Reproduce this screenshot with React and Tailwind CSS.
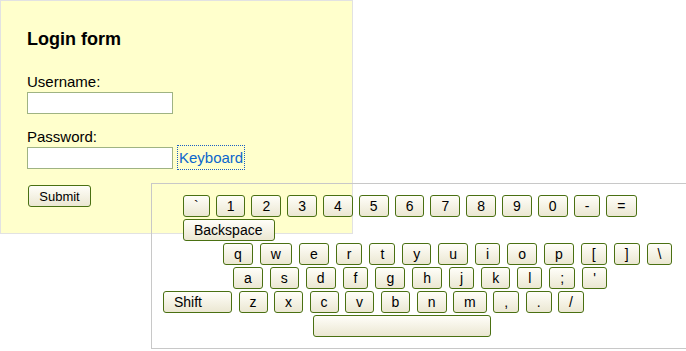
import React from 'react';

const rows = [
  { indent: 'ml-[31px]', gap: 'gap-[6px]', keys: ['`', '1', '2', '3', '4', '5', '6', '7', '8', '9', '0', '-', '='] },
  { indent: 'ml-[31px]', gap: 'gap-[6px]', keys: [{ label: 'Backspace', size: 'w-[92px]' }] },
  { indent: 'ml-[71px]', gap: 'gap-[7px]', keys: 'qwertyuiop[]\\'.split('') },
  { indent: 'ml-[81px]', gap: 'gap-[7px]', keys: "asdfghjkl;'".split('') },
  { indent: 'ml-[11px]', gap: 'gap-[6.5px]', keys: [{ label: 'Shift', size: 'w-[69px] justify-start' }, ...'zxcvbnm,./'.split('')] },
  { indent: 'ml-[161px]', gap: 'gap-[6px]', keys: [{ label: '', size: 'w-[178px]' }] },
];

const Key = ({ k }) => {
  const label = typeof k === 'string' ? k : k.label;
  const size = typeof k === 'string' ? 'justify-center' : k.size;
  return (
    <button
      className={`flex items-center ${size} h-[22px] px-[10px] border border-[#4a7012] rounded-[3px] bg-linear-to-b from-[#fffef9] to-[#ebe7d2] text-[14px] leading-none text-black shrink-0`}
    >
      {label}
    </button>
  );
};

const App = () => {
  return (
    <div className="relative w-[686px] h-[351px] overflow-hidden bg-white font-['Liberation_Sans',Arial,sans-serif]">
      <div className="w-[353px] h-[234px] bg-[#ffffcc] border border-[#e2e2e2] pt-[27px] px-[26px]">
        <h1 className="text-[18px] leading-[22px] font-bold text-black">Login form</h1>
        <form className="flex flex-col items-start">
          <label className="mt-[23px] text-[15px] leading-[18px] text-black">Username:</label>
          <input type="text" className="mt-[1px] w-[146px] h-[22px] bg-white border border-[#9fb383]" />
          <label className="mt-[14px] text-[15px] leading-[18px] text-black">Password:</label>
          <div className="mt-[1px] flex items-start gap-[4px]">
            <input type="password" className="w-[146px] h-[22px] bg-white border border-[#9fb383]" />
            <a href="#" className="-mt-[2px] px-[1px] py-[2px] border border-dotted border-[#1a5fc4] text-[15px] leading-[19px] text-[#0a66cc]">
              Keyboard
            </a>
          </div>
          <button
            type="button"
            className="mt-[15px] ml-[1px] w-[63px] h-[22px] border border-[#4a7012] rounded-[3px] bg-linear-to-b from-[#fffef9] to-[#ebe7d2] text-[13px] leading-none text-black"
          >
            Submit
          </button>
        </form>
      </div>

      <div className="absolute left-[151px] top-[183px] w-[560px] h-[166px] border border-[#c8c8c8] pt-[11px] flex flex-col gap-[2px]">
        {rows.map((row, i) => (
          <div key={i} className={`flex ${row.gap} ${row.indent}`}>
            {row.keys.map((k, j) => (
              <Key key={j} k={k} />
            ))}
          </div>
        ))}
      </div>
    </div>
  );
};

export default App;
